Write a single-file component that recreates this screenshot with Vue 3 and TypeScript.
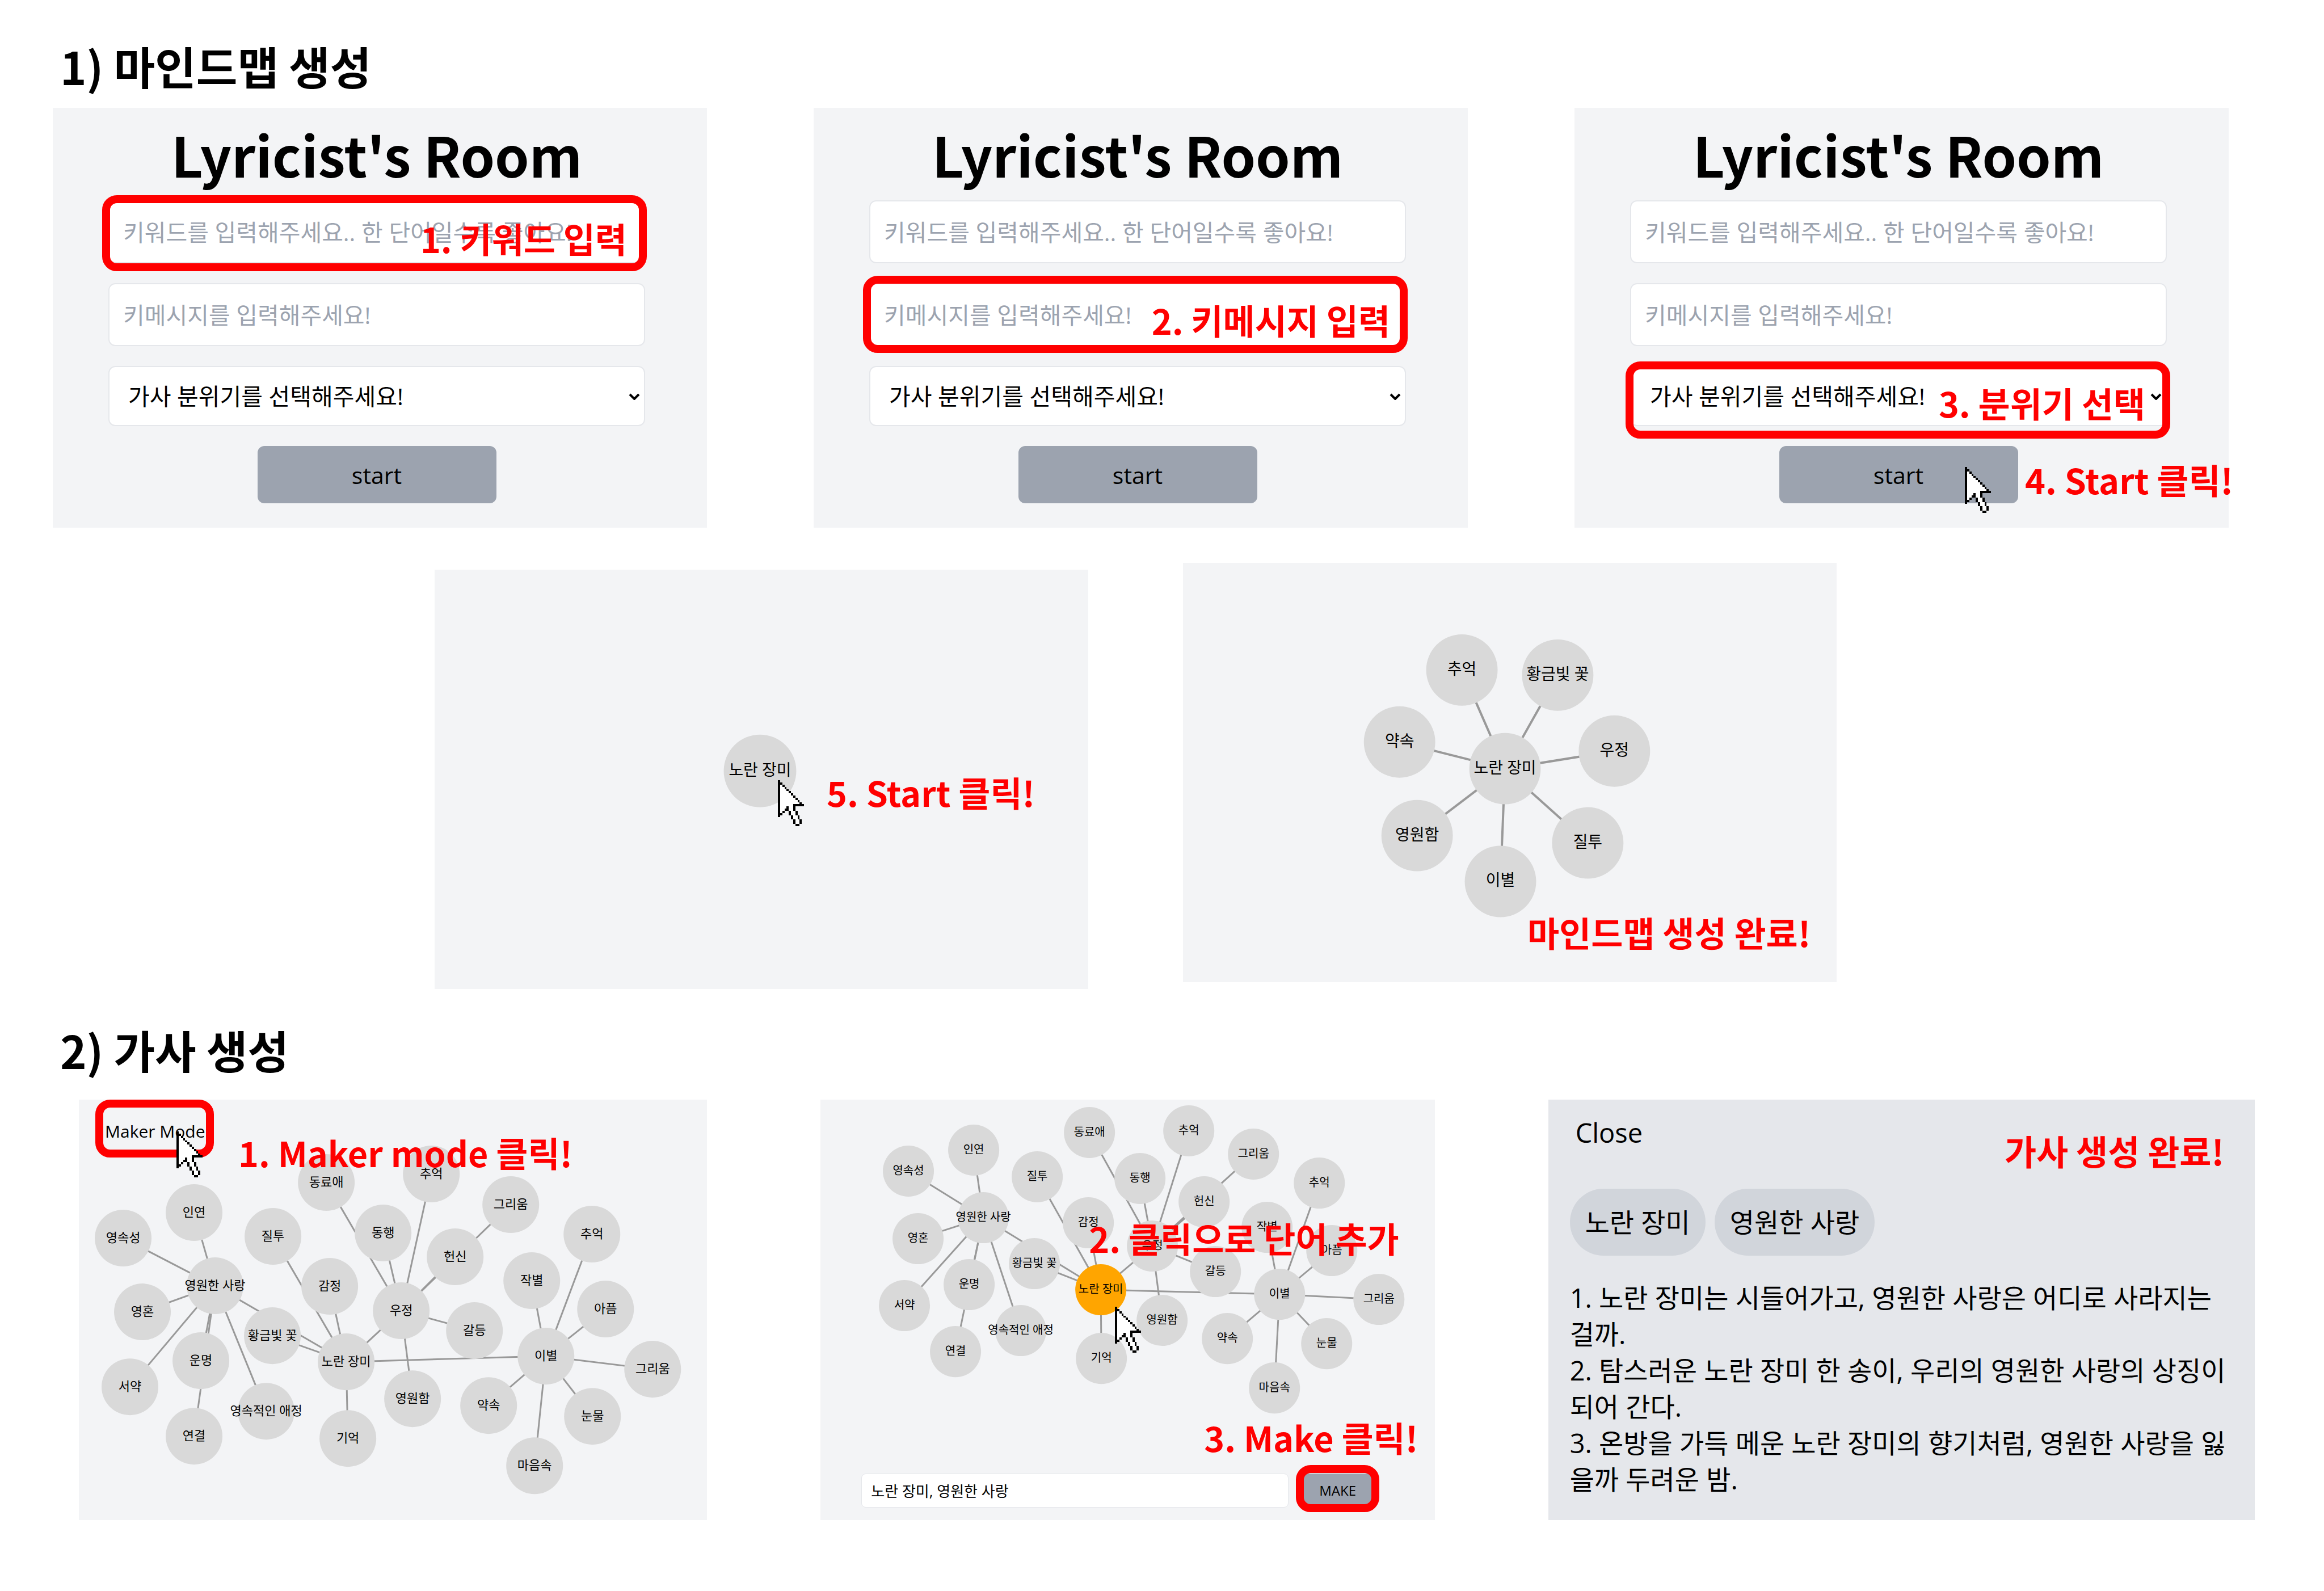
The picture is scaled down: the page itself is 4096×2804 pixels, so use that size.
<script setup lang="ts">
import { ref } from 'vue'

interface MapNode {
  id: string
  label: string
  x: number
  y: number
  active?: boolean
}

interface MindMap {
  nodes: MapNode[]
  edges: [string, string][]
}

type Target = 'keyword' | 'message' | 'mood'

interface FormStep {
  target: Target
  note: string
}

const steps: FormStep[] = [
  { target: 'keyword', note: '1. 키워드 입력' },
  { target: 'message', note: '2. 키메시지 입력' },
  { target: 'mood', note: '3. 분위기 선택' },
]

const moods = ref<string[]>(['', '', ''])
const picked = ref('노란 장미, 영원한 사랑')
const chips = ['노란 장미', '영원한 사랑']
const lyrics = [
  '1. 노란 장미는 시들어가고, 영원한 사랑은 어디로 사라지는 걸까.',
  '2. 탐스러운 노란 장미 한 송이, 우리의 영원한 사랑의 상징이 되어 간다.',
  '3. 온방을 가득 메운 노란 장미의 향기처럼, 영원한 사랑을 잃을까 두려운 밤.',
]

const firstMap: MindMap = {
  nodes: [
    { id: 'rose', label: '노란 장미', x: 568, y: 363 },
    { id: 'memory', label: '추억', x: 492, y: 189 },
    { id: 'gold', label: '황금빛 꽃', x: 661, y: 198 },
    { id: 'friend', label: '우정', x: 761, y: 332 },
    { id: 'envy', label: '질투', x: 714, y: 494 },
    { id: 'part', label: '이별', x: 560, y: 562 },
    { id: 'eternal', label: '영원함', x: 413, y: 481 },
    { id: 'promise', label: '약속', x: 382, y: 316 },
  ],
  edges: [
    ['rose', 'memory'], ['rose', 'gold'], ['rose', 'friend'], ['rose', 'envy'],
    ['rose', 'part'], ['rose', 'eternal'], ['rose', 'promise'],
  ],
}

const words: [string, string][] = [
  ['forever', '영속성'], ['fate', '인연'], ['love', '영원한 사랑'], ['soul', '영혼'],
  ['vow', '서약'], ['destiny', '운명'], ['link', '연결'], ['affection', '영속적인 애정'],
  ['gold', '황금빛 꽃'], ['envy', '질투'], ['fellow', '동료애'], ['feeling', '감정'],
  ['rose', '노란 장미'], ['recall', '기억'], ['together', '동행'], ['memory', '추억'],
  ['friend', '우정'], ['eternal', '영원함'], ['devotion', '헌신'], ['longing', '그리움'],
  ['conflict', '갈등'], ['part', '이별'], ['farewell', '작별'], ['memory2', '추억'],
  ['pain', '아픔'], ['longing2', '그리움'], ['tears', '눈물'], ['promise', '약속'],
  ['heart', '마음속'],
]

const wideEdges: [string, string][] = [
  ['love', 'forever'], ['love', 'fate'], ['love', 'soul'], ['love', 'vow'],
  ['love', 'destiny'], ['love', 'link'], ['love', 'affection'], ['love', 'rose'],
  ['rose', 'gold'], ['rose', 'envy'], ['rose', 'feeling'], ['rose', 'recall'],
  ['rose', 'friend'], ['rose', 'part'],
  ['friend', 'fellow'], ['friend', 'together'], ['friend', 'memory'], ['friend', 'devotion'],
  ['friend', 'longing'], ['friend', 'conflict'], ['friend', 'eternal'],
  ['part', 'farewell'], ['part', 'memory2'], ['part', 'pain'], ['part', 'longing2'],
  ['part', 'tears'], ['part', 'promise'], ['part', 'heart'],
]

function place(points: [number, number][], active?: string): MindMap {
  return {
    nodes: words.map(([id, label], i) => ({
      id, label, x: points[i][0], y: points[i][1], active: id === active,
    })),
    edges: wideEdges,
  }
}

const makerMap = place([
  [78, 244], [203, 199], [240, 328], [112, 374], [90, 506], [215, 460], [203, 593], [330, 549],
  [341, 416], [342, 241], [436, 146], [442, 329], [471, 462], [474, 597], [536, 235], [621, 131],
  [568, 372], [588, 527], [663, 277], [761, 185], [697, 407], [823, 452], [798, 319], [904, 237],
  [928, 369], [1011, 475], [905, 558], [722, 539], [803, 645],
])

const pickMap = place([
  [155, 126], [270, 89], [287, 208], [172, 245], [148, 363], [262, 326], [238, 444], [353, 407],
  [377, 289], [382, 136], [474, 58], [472, 217], [494, 335], [495, 456], [563, 139], [649, 55],
  [585, 258], [602, 389], [676, 180], [763, 96], [696, 303], [809, 343], [787, 225], [879, 147],
  [901, 266], [984, 352], [892, 430], [717, 421], [800, 508],
], 'rose')

function lines(map: MindMap) {
  const at = (id: string) => map.nodes.find((n) => n.id === id)!
  return map.edges.map(([from, to]) => ({ key: `${from}-${to}`, a: at(from), b: at(to) }))
}

// Pointer bitmap: X is outline, . is fill.
const pointer = [
  'X',
  'XX',
  'X.X',
  'X..X',
  'X...X',
  'X....X',
  'X.....X',
  'X......X',
  'X.......X',
  'X........X',
  'X.........X',
  'X......XXXXX',
  'X...X..X',
  'X..XX..X',
  'X.X  X..X',
  'XX   X..X',
  'X     X..X',
  '      X..X',
  '       X..X',
  '       X..X',
  '        XX',
]

function trace(mark: string): string {
  return pointer
    .flatMap((row, y) => [...row].map((c, x) => (c === mark ? `M${x} ${y}h1v1h-1z` : '')))
    .join('')
}

const pointerLine = trace('X')
const pointerFill = trace('.')
</script>

<template>
  <main class="guide">
    <h2 class="heading">1) 마인드맵 생성</h2>

    <section class="row row-forms">
      <form v-for="(step, i) in steps" :key="step.target" class="panel entry" @submit.prevent>
        <h1 class="title">Lyricist's Room</h1>
        <div class="field">
          <input class="box" type="text" aria-label="키워드" placeholder="키워드를 입력해주세요.. 한 단어일수록 좋아요!" />
          <template v-if="step.target === 'keyword'">
            <span class="ring ring-keyword"></span>
            <span class="note note-keyword">{{ step.note }}</span>
          </template>
        </div>
        <div class="field">
          <input class="box" type="text" aria-label="키메시지" placeholder="키메시지를 입력해주세요!" />
          <template v-if="step.target === 'message'">
            <span class="ring ring-message"></span>
            <span class="note note-message">{{ step.note }}</span>
          </template>
        </div>
        <div class="field">
          <select v-model="moods[i]" class="box mood" aria-label="가사 분위기">
            <option value="">가사 분위기를 선택해주세요!</option>
          </select>
          <svg class="chevron" viewBox="0 0 20 12" aria-hidden="true">
            <path d="M2 2l8 8l8-8" fill="none" stroke="#000" stroke-width="4" />
          </svg>
          <template v-if="step.target === 'mood'">
            <span class="ring ring-mood"></span>
            <span class="note note-mood">{{ step.note }}</span>
          </template>
        </div>
        <div class="submit">
          <button class="start" type="submit">start</button>
          <template v-if="step.target === 'mood'">
            <svg class="pointer pointer-start" viewBox="0 0 12 21" aria-hidden="true">
              <path :d="pointerFill" fill="#fff" /><path :d="pointerLine" />
            </svg>
            <span class="note note-start">4. Start 클릭!</span>
          </template>
        </div>
      </form>
    </section>

    <section class="row row-maps">
      <div class="panel seed">
        <svg class="map large" viewBox="0 0 1153 740">
          <circle class="node" cx="574" cy="355" r="64" />
          <text x="574" y="363">노란 장미</text>
        </svg>
        <svg class="pointer pointer-seed" viewBox="0 0 12 21" aria-hidden="true">
          <path :d="pointerFill" fill="#fff" /><path :d="pointerLine" />
        </svg>
        <span class="note note-seed">5. Start 클릭!</span>
      </div>
      <div class="panel">
        <svg class="map large" viewBox="0 0 1153 740">
          <line v-for="l in lines(firstMap)" :key="l.key" :x1="l.a.x" :y1="l.a.y" :x2="l.b.x" :y2="l.b.y" />
          <g v-for="n in firstMap.nodes" :key="n.id">
            <circle class="node" :cx="n.x" :cy="n.y" r="63" />
            <text :x="n.x" :y="n.y + 8">{{ n.label }}</text>
          </g>
        </svg>
        <span class="note note-map">마인드맵 생성 완료!</span>
      </div>
    </section>

    <h2 class="heading heading-lyrics">2) 가사 생성</h2>

    <section class="row row-lyrics">
      <div class="panel">
        <svg class="map medium" viewBox="0 0 1107 740">
          <line v-for="l in lines(makerMap)" :key="l.key" :x1="l.a.x" :y1="l.a.y" :x2="l.b.x" :y2="l.b.y" />
          <g v-for="n in makerMap.nodes" :key="n.id">
            <circle class="node" :cx="n.x" :cy="n.y" r="50" />
            <text :x="n.x" :y="n.y + 7">{{ n.label }}</text>
          </g>
        </svg>
        <button class="maker" type="button">Maker Mode</button>
        <span class="ring ring-maker"></span>
        <svg class="pointer pointer-maker" viewBox="0 0 12 21" aria-hidden="true">
          <path :d="pointerFill" fill="#fff" /><path :d="pointerLine" />
        </svg>
        <span class="note note-maker">1. Maker mode 클릭!</span>
      </div>

      <div class="panel">
        <svg class="map small" viewBox="0 0 1082 640">
          <line v-for="l in lines(pickMap)" :key="l.key" :x1="l.a.x" :y1="l.a.y" :x2="l.b.x" :y2="l.b.y" />
          <g v-for="n in pickMap.nodes" :key="n.id">
            <circle class="node" :class="{ active: n.active }" :cx="n.x" :cy="n.y" r="45" />
            <text :x="n.x" :y="n.y + 6">{{ n.label }}</text>
          </g>
        </svg>
        <form class="bar" @submit.prevent>
          <input v-model="picked" class="picked" type="text" aria-label="선택한 단어" />
          <div class="make-wrap">
            <button class="make" type="submit">MAKE</button>
            <span class="ring ring-make"></span>
          </div>
        </form>
        <svg class="pointer pointer-pick" viewBox="0 0 12 21" aria-hidden="true">
          <path :d="pointerFill" fill="#fff" /><path :d="pointerLine" />
        </svg>
        <span class="note note-pick">2. 클릭으로 단어 추가</span>
        <span class="note note-make">3. Make 클릭!</span>
      </div>

      <article class="panel result">
        <button class="close" type="button">Close</button>
        <ul class="chips">
          <li v-for="chip in chips" :key="chip" class="chip">{{ chip }}</li>
        </ul>
        <div class="lyrics">
          <p v-for="line in lyrics" :key="line">{{ line }}</p>
        </div>
        <span class="note note-done">가사 생성 완료!</span>
      </article>
    </section>
  </main>
</template>

<style>
body {
  background: #fff;
}
</style>

<style scoped>
.guide {
  padding: 76px 0 125px;
  color: #000;
  font-family: 'Open Sans', 'Noto Sans CJK KR', sans-serif;
}

.guide *,
.guide {
  box-sizing: border-box;
}

.heading {
  margin: 0 0 34px 106px;
  font: 700 79px/80px 'Noto Sans CJK KR', sans-serif;
}

.heading-lyrics {
  margin-top: 67px;
  margin-bottom: 48px;
}

.row {
  display: grid;
  align-items: start;
}

.row-forms {
  grid-template-columns: repeat(3, 1fr);
  gap: 188px;
  padding: 0 168px 0 93px;
}

.row-maps {
  grid-template-columns: repeat(2, 1fr);
  gap: 167px;
  margin-top: 62px;
  padding: 0 859px 0 766px;
}

.row-lyrics {
  grid-template-columns: 1107fr 1082fr 1245fr;
  gap: 200px;
  align-items: stretch;
  padding: 0 122px 0 139px;
}

.panel {
  position: relative;
  background: #f3f4f6;
}

.seed {
  margin-top: 12px;
}

/* Entry form */
.entry {
  display: flex;
  flex-direction: column;
  gap: 35px;
  padding: 12px 109px 43px 98px;
}

.title {
  margin: 0 0 -21px;
  font: 700 97px/137px 'Noto Sans CJK KR', sans-serif;
  text-align: center;
}

.field,
.submit {
  position: relative;
}

.box {
  display: block;
  width: 100%;
  height: 111px;
  margin: 0;
  padding: 0 24px;
  border: 2px solid #e5e7eb;
  border-radius: 12px;
  background: #fff;
  color: #000;
  font: inherit;
  font-size: 41px;
}

.box::placeholder {
  color: #9ca3af;
  opacity: 1;
}

.mood {
  height: 106px;
  padding: 0 33px;
  appearance: none;
}

.chevron {
  position: absolute;
  top: 48px;
  right: 9px;
  width: 20px;
  height: 12px;
}

.start {
  display: block;
  width: 421px;
  height: 101px;
  margin: 0 auto;
  padding: 0;
  border: 0;
  border-radius: 12px;
  background: #9ca3af;
  color: #000;
  font: inherit;
  font-size: 41px;
}

/* Mind maps */
.map {
  display: block;
  width: 100%;
}

.map line {
  stroke: #999;
  stroke-width: 3px;
}

.map text {
  fill: #000;
  text-anchor: middle;
}

.node {
  fill: #d9d9d9;
}

.node.active {
  fill: #ffa500;
}

.large text {
  font-size: 28px;
}

.large line {
  stroke-width: 4px;
}

.medium text {
  font-size: 22px;
}

.small text {
  font-size: 20px;
}

.maker {
  position: absolute;
  top: 36px;
  left: 46px;
  padding: 0;
  border: 0;
  background: none;
  color: #000;
  font: inherit;
  font-size: 30px;
  line-height: 40px;
}

.bar {
  display: flex;
  gap: 25px;
  padding: 18px 109px 22px 72px;
}

.picked {
  flex: 1;
  min-width: 0;
  height: 60px;
  padding: 0 16px;
  border: 1px solid #e5e7eb;
  border-radius: 8px;
  background: #fff;
  color: #000;
  font: inherit;
  font-size: 26px;
}

.make-wrap {
  position: relative;
}

.make {
  width: 124px;
  height: 60px;
  padding: 0;
  border: 0;
  border-radius: 6px;
  background: #9ca3af;
  color: #000;
  font: inherit;
  font-size: 24px;
}

/* Lyrics */
.result {
  padding: 26px 38px 0;
  background: #e5e7eb;
}

.close {
  display: block;
  padding: 0 10px;
  border: 0;
  background: none;
  color: #000;
  font: inherit;
  font-size: 47px;
  line-height: 64px;
}

.chips {
  display: flex;
  gap: 16px;
  margin: 67px 0 42px;
  padding: 0;
  list-style: none;
}

.chip {
  padding: 0 27px;
  border-radius: 59px;
  background: #d1d5db;
  font-size: 47px;
  line-height: 118px;
}

.lyrics p {
  margin: 0;
  font-size: 47px;
  line-height: 64px;
}

/* Annotations laid over the panels */
.ring {
  position: absolute;
  border: 14px solid #f00;
  border-radius: 26px;
  pointer-events: none;
}

.ring-keyword {
  inset: -9px -3px -14px -11px;
}

.ring-message {
  inset: -13px -3px -12px -11px;
}

.ring-mood {
  inset: -8px -6px -22px -8px;
}

.ring-maker {
  top: 0;
  left: 29px;
  width: 209px;
  height: 102px;
}

.ring-make {
  inset: -15px -11px -8px -12px;
}

.note {
  position: absolute;
  color: #f00;
  font: 700 61px/60px 'Noto Sans CJK KR', sans-serif;
  white-space: nowrap;
}

.note-keyword {
  top: 37px;
  right: 32px;
}

.note-message {
  top: 35px;
  right: 28px;
}

.note-mood {
  top: 35px;
  right: 38px;
}

.note-start {
  top: 29px;
  left: 696px;
}

.note-seed {
  top: 362px;
  left: 691px;
}

.note-map {
  top: 621px;
  left: 607px;
}

.note-maker {
  top: 63px;
  left: 281px;
}

.note-pick {
  top: 214px;
  left: 473px;
}

.note-make {
  top: 565px;
  left: 676px;
}

.note-done {
  top: 60px;
  right: 54px;
}

.pointer {
  position: absolute;
  width: 46px;
  height: 81px;
  shape-rendering: crispEdges;
}

.pointer-start {
  top: 37px;
  left: 590px;
}

.pointer-seed {
  top: 371px;
  left: 605px;
}

.pointer-maker {
  top: 56px;
  left: 172px;
}

.pointer-pick {
  top: 365px;
  left: 519px;
}
</style>
